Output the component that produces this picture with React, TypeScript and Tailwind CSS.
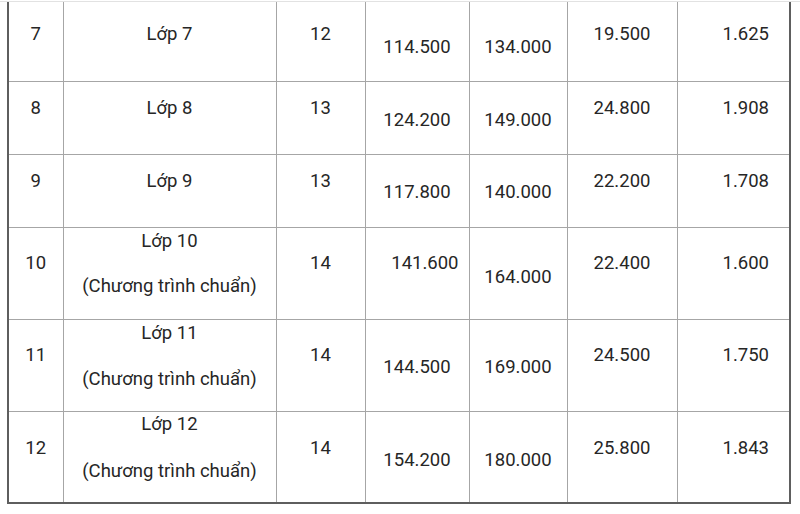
type Row = {
  no: string;
  name: string[];
  pages: string;
  price: string;
  newPrice: string;
  diff: string;
  avg: string;
  h: string;
  pt: string;
  low: string;
  nameGap?: string;
  priceRight?: boolean;
};

const rows: Row[] = [
  { no: "7", name: ["Lớp 7"], pages: "12", price: "114.500", newPrice: "134.000", diff: "19.500", avg: "1.625", h: "h-[79px]", pt: "pt-[20px]", low: "pt-[33px]" },
  { no: "8", name: ["Lớp 8"], pages: "13", price: "124.200", newPrice: "149.000", diff: "24.800", avg: "1.908", h: "h-[73px]", pt: "pt-[14px]", low: "pt-[26px]" },
  { no: "9", name: ["Lớp 9"], pages: "13", price: "117.800", newPrice: "140.000", diff: "22.200", avg: "1.708", h: "h-[73px]", pt: "pt-[14px]", low: "pt-[25px]" },
  { no: "10", name: ["Lớp 10", "(Chương trình chuẩn)"], pages: "14", price: "141.600", newPrice: "164.000", diff: "22.400", avg: "1.600", h: "h-[92px]", pt: "pt-[23px]", low: "pt-[37px]", nameGap: "mt-[21px]", priceRight: true },
  { no: "11", name: ["Lớp 11", "(Chương trình chuẩn)"], pages: "14", price: "144.500", newPrice: "169.000", diff: "24.500", avg: "1.750", h: "h-[92px]", pt: "pt-[23px]", low: "pt-[35px]", nameGap: "mt-[22px]" },
  { no: "12", name: ["Lớp 12", "(Chương trình chuẩn)"], pages: "14", price: "154.200", newPrice: "180.000", diff: "25.800", avg: "1.843", h: "h-[92px]", pt: "pt-[24px]", low: "pt-[36px]", nameGap: "mt-[23px]" },
];

const cell = "border border-[#a6a6a6] align-top p-0";

export default function App() {
  return (
    <div className="w-[800px] h-[514px] bg-white overflow-hidden font-['Roboto','Liberation_Sans',sans-serif] text-[18.5px] leading-[24px] text-[#262626]">
      <div className="h-px bg-[#e2e2e2] mt-px" />
      <table className="ml-[7px] w-[782px] table-fixed border-collapse border-l-2 border-r-2 border-b-2 border-[#5e5e5e]">
        <colgroup>
          <col className="w-[55px]" />
          <col className="w-[213px]" />
          <col className="w-[89px]" />
          <col className="w-[104px]" />
          <col className="w-[98px]" />
          <col className="w-[110px]" />
          <col className="w-[113px]" />
        </colgroup>
        <tbody>
          {rows.map((r, i) => {
            const top = i === 0 ? "border-t-0" : "";
            const namePt = r.nameGap ? (i === 5 ? "pt-[0px]" : "pt-[1px]") : r.pt;
            return (
              <tr key={r.no} className={r.h}>
                <td className={`${cell} ${top} ${r.pt} text-center`}>{r.no}</td>
                <td className={`${cell} ${top} ${namePt} text-center`}>
                  {r.name.map((n, j) => (
                    <p key={n} className={j > 0 ? r.nameGap : ""}>
                      {n}
                    </p>
                  ))}
                </td>
                <td className={`${cell} ${top} ${r.pt} text-center`}>{r.pages}</td>
                <td
                  className={`${cell} ${top} ${
                    r.priceRight ? `${r.pt} text-right pr-[10px]` : `${r.low} text-center`
                  }`}
                >
                  {r.price}
                </td>
                <td className={`${cell} ${top} ${r.low} text-center`}>{r.newPrice}</td>
                <td className={`${cell} ${top} ${r.pt} text-center`}>{r.diff}</td>
                <td className={`${cell} ${top} ${r.pt} text-right pr-[20px]`}>{r.avg}</td>
              </tr>
            );
          })}
        </tbody>
      </table>
    </div>
  );
}
